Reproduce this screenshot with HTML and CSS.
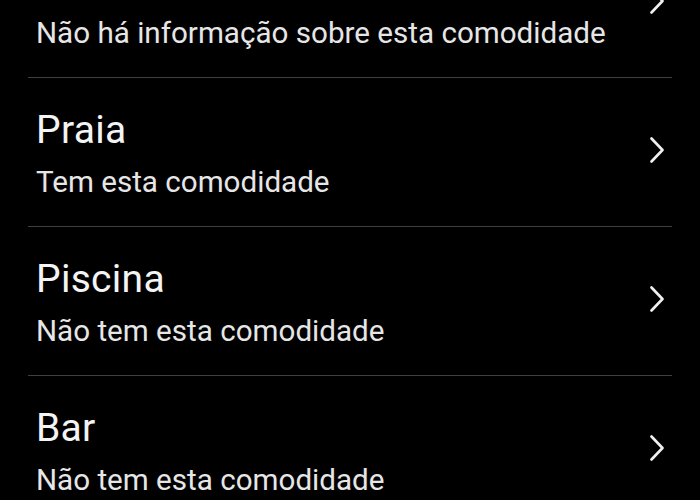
FILE: index.html
```html
<!DOCTYPE html>
<html lang="pt">
<head>
    <meta charset="UTF-8">
    <meta name="viewport" content="width=device-width, initial-scale=1.0">
    <title>Comodidades</title>
    <link rel="stylesheet" href="styles.css">
</head>
<body>
    <ul class="amenities">
        <li class="amenity">
            <div class="amenity-text">
                <div class="amenity-name">Centro de fitness</div>
                <div class="amenity-status">Não há informação sobre esta comodidade</div>
            </div>
            <svg class="chevron" viewBox="0 0 14 26"><path d="M1.5 1.5 L12.5 13 L1.5 24.5"/></svg>
        </li>
        <li class="amenity">
            <div class="amenity-text">
                <div class="amenity-name">Praia</div>
                <div class="amenity-status">Tem esta comodidade</div>
            </div>
            <svg class="chevron" viewBox="0 0 14 26"><path d="M1.5 1.5 L12.5 13 L1.5 24.5"/></svg>
        </li>
        <li class="amenity">
            <div class="amenity-text">
                <div class="amenity-name">Piscina</div>
                <div class="amenity-status">Não tem esta comodidade</div>
            </div>
            <svg class="chevron" viewBox="0 0 14 26"><path d="M1.5 1.5 L12.5 13 L1.5 24.5"/></svg>
        </li>
        <li class="amenity">
            <div class="amenity-text">
                <div class="amenity-name">Bar</div>
                <div class="amenity-status">Não tem esta comodidade</div>
            </div>
            <svg class="chevron" viewBox="0 0 14 26"><path d="M1.5 1.5 L12.5 13 L1.5 24.5"/></svg>
        </li>
    </ul>
</body>
</html>
```

FILE: styles.css
```css
body {
    margin: 0;
    background: #000;
    color: #f4f4f4;
    font-family: Roboto, "Noto Sans", sans-serif;
    overflow: hidden;
}
.amenities {
    list-style: none;
    margin: -71px 28px 0;
    padding: 0;
}
.amenity {
    display: flex;
    align-items: center;
    justify-content: space-between;
    padding: 30px 8px 26px 8px;
    border-bottom: 1px solid #3f3f3f;
}
.amenity-name {
    font-size: 39px;
    line-height: 45px;
    letter-spacing: 0.3px;
}
.amenity-status {
    margin-top: 11px;
    font-size: 29.6px;
    line-height: 36px;
    color: #e6e6e6;
}
.chevron {
    width: 14px;
    height: 26px;
    margin-top: -8px;
    fill: none;
    stroke: #f0f0f0;
    stroke-width: 2.6;
    stroke-linecap: round;
    stroke-linejoin: round;
}
```
